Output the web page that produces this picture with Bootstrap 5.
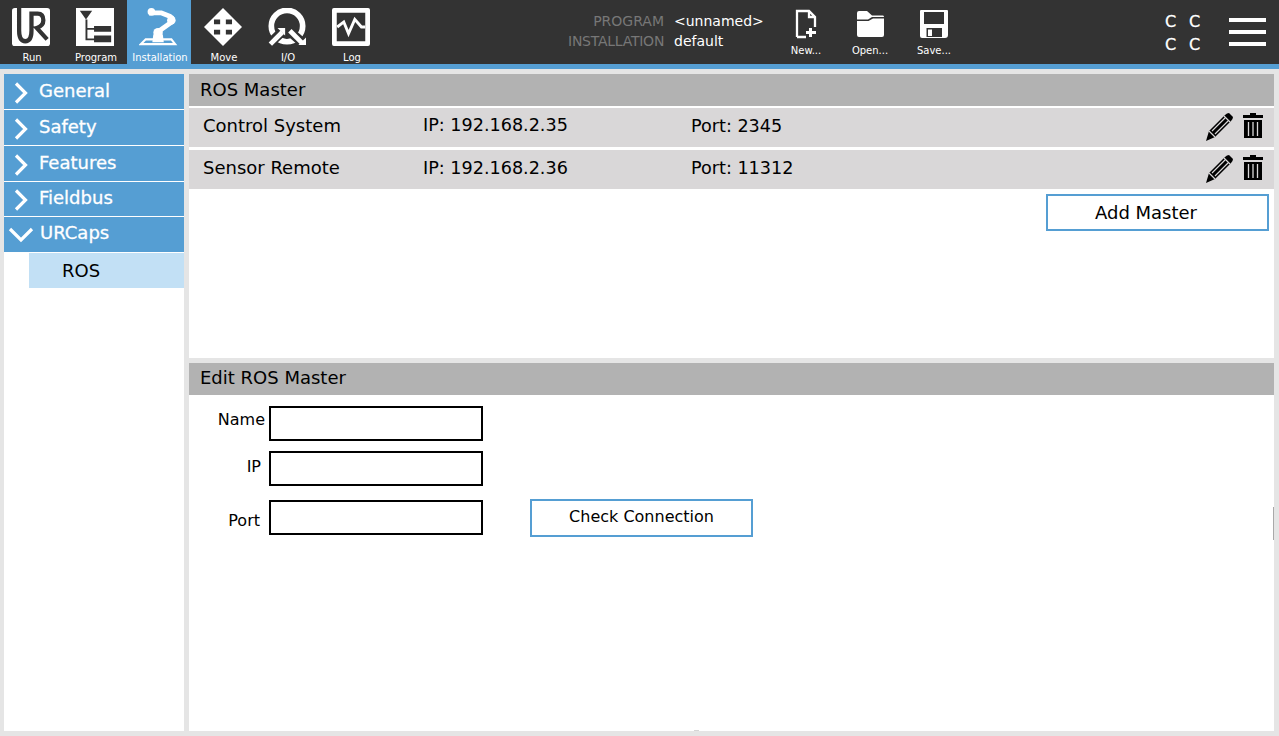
<!DOCTYPE html>
<html lang="en">
<head>
<meta charset="utf-8">
<title>ROS Master</title>
<link href="https://cdn.jsdelivr.net/npm/bootstrap@5.3.0/dist/css/bootstrap.min.css" rel="stylesheet">
<style>
html,body{height:100%}
body{background:#e5e5e5;font-family:"DejaVu Sans",sans-serif;font-size:18px;color:#000;overflow:hidden}
.app-shell{height:736px}
.topbar{height:69px;background:#333;border-bottom:5px solid #559ed3;color:#fff}
.tab-nav{margin-left:-1px}
.tab-item{width:64px;height:64px;padding-top:8px;color:#fff;font-size:10px;line-height:12px;text-decoration:none}
.tab-item svg{display:block;width:40px;height:40px;margin-bottom:6px}
.tab-lab{margin-left:2px}
.tab-item.is-on{background:#559ed3}
.prog-info{margin-left:185px;width:206px;font-size:14px;line-height:20px;padding-top:11px}
.prog-lab{width:96px;text-align:right;color:#777;white-space:nowrap;display:block}
.prog-lab.tight{letter-spacing:-.25px}
.prog-val{margin-left:10px}
.file-btn{width:64px;height:64px;padding-top:9px;font-size:10px;line-height:12px;color:#fff}
.file-btn svg{display:block;width:32px;height:30px;margin-bottom:6px}
.cc-grid{margin-left:199px;width:36px;height:56px;font-size:16px;line-height:23px;padding-top:10px;grid-template-columns:24px 12px;-webkit-text-stroke:.3px #fff}
.burger{margin-left:28px;margin-top:18px;width:37px;gap:8px}
.burger i{display:block;height:4px;background:#fff}
.work{padding:5px 5px 5px 4px;gap:5px;height:667px}
.side-col{width:180px;background:#fff}
.side-link{height:35px;margin-bottom:1px;background:#559ed3;color:#fff;-webkit-text-stroke:.3px #fff}
.side-link svg{width:20px;height:26px;margin-left:9px;margin-right:6px}
.side-link.open svg{width:26px;margin-left:4px;margin-right:6px;height:20px}
.side-link.short{height:34px}
.raise-z{margin-bottom:2px}
.raise-a{margin-bottom:4px}
.raise-b{margin-bottom:5px}
.side-sub{margin-left:25px;height:35px;background:#c2e0f5;padding-left:33px;line-height:35px}
.main-col{width:1085px;gap:5px}
.pane{background:#fff}
.pane-top{height:284px}
.pane-bot{height:368px;position:relative}
.pane-head{height:32px;line-height:30px;background:#b2b2b2;padding-left:11px}
.pane-top .pane-head{line-height:32px}
.master-row{height:39px;background:#d9d7d8;margin-top:2px;padding:0 11px 2px 14px}
.master-row + .master-row{margin-top:3px}
.m-name{width:220px;margin-bottom:2px}
.m-ip{width:268px;font-size:17.6px}
.m-ip.up-a{margin-bottom:3px}
.m-port{font-size:17.6px}
.m-acts{gap:10px;padding-top:5px}
.add-wrap{padding:5px 5px 0 0}
.ur-btn{background:#fff;border:2px solid #559ed3;border-radius:0;color:#000;font-size:18px;padding:0 23px 0 0;height:37px;width:223px}
.ed-form{padding:11px 0 0 0}
.ed-row{margin-bottom:11px;height:34px}
.ed-row.row-b{margin-bottom:15px}
.ed-lab{width:80px;text-align:right;font-size:16px;line-height:24px}
.lab-a{padding:2px 4px 0 0}
.lab-b{padding:4px 8px 0 0}
.lab-c{padding:9px 9px 0 0}
.ed-box{width:214px;height:35px;border:2px solid #000;background:#fff;border-radius:0;padding:0 6px;font-size:16px;outline:0}
.ur-btn.btn-chk{margin:-1px 0 0 47px;width:223px;height:38px;font-size:16px;line-height:30px;padding:0 0 2px}
.edge-tick{position:absolute;right:0;top:144px;width:1px;height:33px;background:#a9a9a9}
.bottom-nub{position:absolute;left:694px;top:730px;width:5px;height:1px;background:#d5d5d5}
</style>
</head>
<body>
<div class="app-shell d-flex flex-column">
<header class="topbar d-flex">
  <nav class="tab-nav d-flex">
    <a class="tab-item d-flex flex-column align-items-center" href="#">
      <svg viewBox="0 0 40 40"><rect width="40" height="40" rx="3" fill="#fff"/><path d="M7.500 0V24Q7.500 35 14 35Q20.500 35 20.500 24V6H27Q33 6 33 13Q33 19 26 21L37 33" fill="none" stroke="#333" stroke-width="4.500"/></svg><span class="tab-lab">Run</span></a>
    <a class="tab-item d-flex flex-column align-items-center" href="#">
      <svg viewBox="0 0 40 40"><rect width="40" height="40" fill="#fff"/><path d="M4 3H17L10.500 12Z" fill="#333"/><path d="M11 12V34M11 22H20M11 33H20" stroke="#333" stroke-width="2" fill="none"/><path d="M19 19H37V25H19ZM19 29H37V36H19Z" fill="#333"/></svg><span class="tab-lab">Program</span></a>
    <a class="tab-item is-on d-flex flex-column align-items-center" href="#">
      <svg viewBox="0 0 40 40"><path d="M6 33H33L37 38H1Z" fill="none" stroke="#fff" stroke-width="2.200"/><path d="M14 28H24L25 36H13Z" fill="#fff"/><path d="M19 28L19 25L33 15Q36 11 32 9L22 5H12V8" fill="none" stroke="#fff" stroke-width="5" stroke-linejoin="round"/><circle cx="19" cy="26" r="5" fill="#fff"/><circle cx="33" cy="13" r="4.500" fill="#fff"/><circle cx="12" cy="4" r="4" fill="#fff"/></svg><span class="tab-lab">Installation</span></a>
    <a class="tab-item d-flex flex-column align-items-center" href="#">
      <svg viewBox="0 0 40 40"><path fill-rule="evenodd" d="M20 0L40 20L20 40L0 20ZM10.500 12H17V17H10.500ZM23 12H29.500V17H23ZM10.500 23H17V28H10.500ZM23 23H29.500V28H23Z" fill="#fff"/></svg><span class="tab-lab">Move</span></a>
    <a class="tab-item d-flex flex-column align-items-center" href="#">
      <svg viewBox="0 0 40 40"><circle cx="20" cy="19" r="16.500" fill="none" stroke="#fff" stroke-width="6"/><path d="M1 38L16 24M22 24L38 38" stroke="#333" stroke-width="10"/><path d="M11 22H18V29Z" stroke="#333" stroke-width="3" fill="#333"/><path d="M2.500 38L15 25.500" stroke="#fff" stroke-width="5"/><path d="M10 21H18V29Z" fill="#fff"/><path d="M23 24L36 37" stroke="#fff" stroke-width="5"/><path d="M32 39H40V31Z" fill="#fff"/></svg><span class="tab-lab">I/O</span></a>
    <a class="tab-item d-flex flex-column align-items-center" href="#">
      <svg viewBox="0 0 40 40"><rect width="40" height="40" rx="2" fill="#fff"/><rect x="5" y="5" width="30" height="30" fill="#333"/><path d="M5.500 20L12.400 14.700L17.400 27L24 12L31 20H35" fill="none" stroke="#fff" stroke-width="3"/></svg><span class="tab-lab">Log</span></a>
  </nav>
  <div class="prog-info">
    <div class="d-flex"><span class="prog-lab">PROGRAM</span><span class="prog-val">&lt;unnamed&gt;</span></div>
    <div class="d-flex"><span class="prog-lab tight">INSTALLATION</span><span class="prog-val">default</span></div>
  </div>
  <div class="d-flex">
    <div class="file-btn d-flex flex-column align-items-center">
      <svg viewBox="0 0 32 30"><path d="M7 28V2H19L25 8V18M7 28H16M19 2V8H25" fill="none" stroke="#fff" stroke-width="2.300"/><path d="M20.500 19V28M16 23.500H26" stroke="#fff" stroke-width="3"/></svg>New...</div>
    <div class="file-btn d-flex flex-column align-items-center">
      <svg viewBox="0 0 32 30"><path d="M3 4Q3 2 5 2H13L18 6.500H29Q30 6.500 30 8H18L14 10.500H3Z" fill="#fff"/><path d="M3 12H14.500L19 9.500H30V26Q30 28 28 28H5Q3 28 3 26Z" fill="#fff"/></svg>Open...</div>
    <div class="file-btn d-flex flex-column align-items-center">
      <svg viewBox="0 0 32 30"><path d="M3 1H29Q30 1 30 2V26Q30 29 27 29H4Q2 29 2 27V2Q2 1 3 1ZM6 3V15H26V3ZM8.500 19V28H24V19Z" fill="#fff" fill-rule="evenodd"/><path d="M10 20.500H14V27H10Z" fill="#fff"/></svg>Save...</div>
  </div>
  <div class="cc-grid d-grid"><span>C</span><span>C</span><span>C</span><span>C</span></div>
  <div class="burger d-flex flex-column"><i></i><i></i><i></i></div>
</header>
<main class="work d-flex flex-grow-1">
  <aside class="side-col">
    <div class="side-link d-flex align-items-center"><svg viewBox="0 0 20 26"><path d="M3 4.500L12.500 14L3 23.500" fill="none" stroke="#fff" stroke-width="3.200"/></svg><span class="raise-z">General</span></div>
    <div class="side-link d-flex align-items-center"><svg viewBox="0 0 20 26"><path d="M3 4.500L12.500 14L3 23.500" fill="none" stroke="#fff" stroke-width="3.200"/></svg><span class="raise-z">Safety</span></div>
    <div class="side-link d-flex align-items-center"><svg viewBox="0 0 20 26"><path d="M3 4.500L12.500 14L3 23.500" fill="none" stroke="#fff" stroke-width="3.200"/></svg><span class="raise-z">Features</span></div>
    <div class="side-link short d-flex align-items-center"><svg viewBox="0 0 20 26"><path d="M3 4.500L12.500 14L3 23.500" fill="none" stroke="#fff" stroke-width="3.200"/></svg><span class="raise-a">Fieldbus</span></div>
    <div class="side-link open d-flex align-items-center"><svg viewBox="0 0 26 20"><path d="M2 4L13 15L24 4" fill="none" stroke="#fff" stroke-width="3.200"/></svg><span class="raise-b">URCaps</span></div>
    <div class="side-sub">ROS</div>
  </aside>
  <div class="main-col d-flex flex-column">
    <section class="pane pane-top">
      <div class="pane-head">ROS Master</div>
      <div class="master-row d-flex align-items-center">
        <span class="m-name">Control System</span><span class="m-ip up-a">IP: 192.168.2.35</span><span class="m-port">Port: 2345</span>
        <span class="m-acts ms-auto d-flex align-self-start">
          <svg width="27" height="28" viewBox="0 0 27 28"><path d="M0 28L3 18L19 2Q21 0 23 0L27 4Q27 6 25 8L9 24Z" fill="#000"/><path d="M6 18L19 5M9 21L22 8M18 3L24 9M3 18L9 24" stroke="#d9d7d8" stroke-width="1.200"/></svg>
          <svg width="20" height="25" viewBox="0 0 20 25"><path d="M7 0H13V2H20V5H0V2H7ZM1 7H19V25H1Z" fill="#000"/><path d="M5.500 9V23M10 9V23M14.500 9V23" stroke="#d9d7d8" stroke-width="1.300"/></svg>
        </span>
      </div>
      <div class="master-row d-flex align-items-center">
        <span class="m-name">Sensor Remote</span><span class="m-ip">IP: 192.168.2.36</span><span class="m-port">Port: 11312</span>
        <span class="m-acts ms-auto d-flex align-self-start">
          <svg width="27" height="28" viewBox="0 0 27 28"><path d="M0 28L3 18L19 2Q21 0 23 0L27 4Q27 6 25 8L9 24Z" fill="#000"/><path d="M6 18L19 5M9 21L22 8M18 3L24 9M3 18L9 24" stroke="#d9d7d8" stroke-width="1.200"/></svg>
          <svg width="20" height="25" viewBox="0 0 20 25"><path d="M7 0H13V2H20V5H0V2H7ZM1 7H19V25H1Z" fill="#000"/><path d="M5.500 9V23M10 9V23M14.500 9V23" stroke="#d9d7d8" stroke-width="1.300"/></svg>
        </span>
      </div>
      <div class="add-wrap d-flex justify-content-end"><button class="btn ur-btn" type="button">Add Master</button></div>
    </section>
    <section class="pane pane-bot">
      <div class="pane-head">Edit ROS Master</div>
      <form class="ed-form">
        <div class="ed-row d-flex"><label class="ed-lab lab-a">Name</label><input class="ed-box" type="text" aria-label="Name"></div>
        <div class="ed-row row-b d-flex"><label class="ed-lab lab-b">IP</label><input class="ed-box" type="text" aria-label="IP"></div>
        <div class="ed-row d-flex"><label class="ed-lab lab-c">Port</label><input class="ed-box" type="text" aria-label="Port"><button class="btn ur-btn btn-chk" type="button">Check Connection</button></div>
      </form>
      <span class="edge-tick"></span>
    </section>
  </div>
</main>
</div>
<span class="bottom-nub"></span>
<script src="https://cdn.jsdelivr.net/npm/bootstrap@5.3.0/dist/js/bootstrap.bundle.min.js"></script>
</body>
</html>
